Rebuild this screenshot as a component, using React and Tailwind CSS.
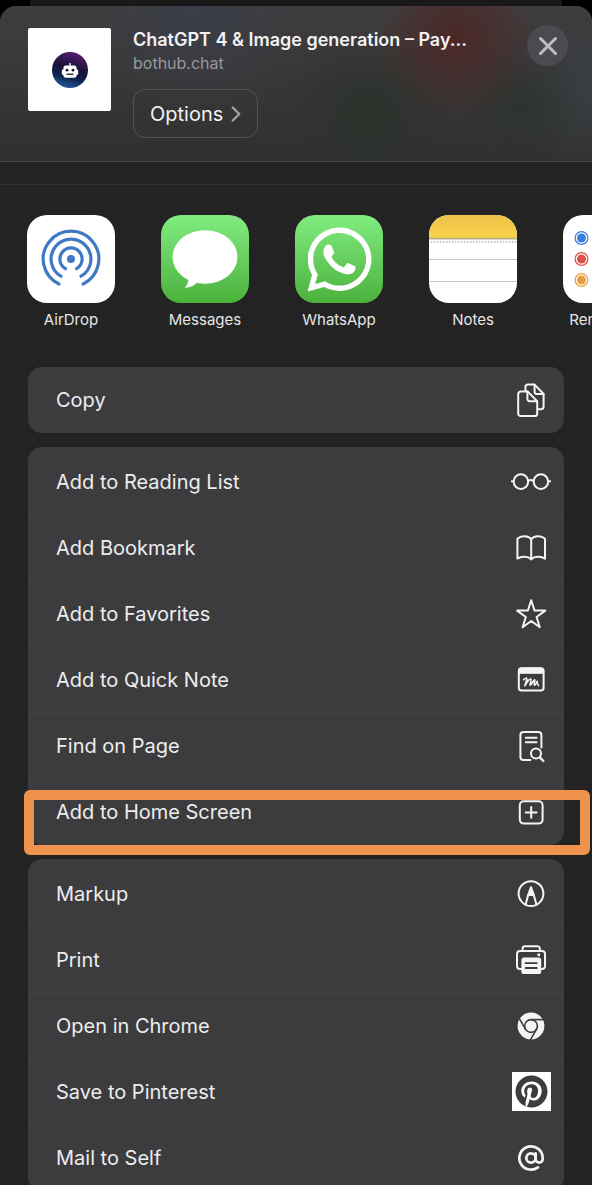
import React from "react";
import { FaWhatsapp, FaPinterest } from "react-icons/fa";
import { AtSign, ChevronRight, X } from "lucide-react";

const LineIcon = ({ children }) => (
    <svg
        viewBox="0 0 40 40"
        className="h-10 w-10"
        fill="none"
        stroke="currentColor"
        strokeWidth="2"
        strokeLinecap="round"
        strokeLinejoin="round"
        aria-hidden="true"
    >
        {children}
    </svg>
);

const CopyIcon = () => (
    <LineIcon>
        <path d="M14.4 10.5V7.2a2.6 2.6 0 0 1 2.6-2.6h6.6l9 9.4v12.6a2.6 2.6 0 0 1-2.6 2.6h-3" />
        <path d="M23.6 4.8v7a2.2 2.2 0 0 0 2.2 2.2h6.6" />
        <path d="M9.8 11.4h6.8l9.6 9.8v12.2a2.6 2.6 0 0 1-2.6 2.6H9.8a2.6 2.6 0 0 1-2.6-2.6V14a2.6 2.6 0 0 1 2.6-2.6z" />
        <path d="M16.4 11.6v7.4a2.2 2.2 0 0 0 2.2 2.2h7.4" />
    </LineIcon>
);

const GlassesIcon = () => (
    <LineIcon>
        <circle cx="9.9" cy="19.6" r="7.3" />
        <circle cx="29.9" cy="19.6" r="7.3" />
        <path d="M17.2 18.8q2.7-1.4 5.4 0M.8 19.2h1.8M37.4 19.2h1.8" />
    </LineIcon>
);

const BookIcon = () => (
    <LineIcon>
        <path d="M20.2 11.2C17.6 7.2 10 7.2 6.4 10.8v19.8c3.8-2.4 10.6-2.6 13.8.8 3.2-3.4 10-3.2 13.8-.8V10.8c-3.6-3.6-11.2-3.6-13.8.4z" />
        <path d="M20.2 11.2v20" />
    </LineIcon>
);

const StarIcon = () => (
    <LineIcon>
        <path d="M20.2 6.2l3.3 10.3 10.8.1-8.7 6.4 3.2 10.3-8.6-6.3-8.6 6.3 3.2-10.3-8.7-6.4 10.8-.1z" />
    </LineIcon>
);

const QuickNoteIcon = () => (
    <LineIcon>
        <rect x="7.8" y="8.2" width="24.8" height="22.4" rx="2.8" />
        <path d="M7.8 13.2V11a2.8 2.8 0 0 1 2.8-2.8h19.2a2.8 2.8 0 0 1 2.8 2.8v2.2z" fill="currentColor" strokeWidth="1.2" />
        <path d="M12.6 19.6c2-1.8 3.6-2 3.2 0l-2 6.2c2-4 5-7.6 6.2-6.6 1 .8-1.8 5.4-.8 6 .9.5 3-4.8 4.4-5.4 1 .2-1.2 4.6-.2 5.4.8.4 2-1.8 2.8-4 0 2.2.2 3.4 1.4 4.4" strokeWidth="1.6" />
    </LineIcon>
);

const FindIcon = () => (
    <LineIcon>
        <path d="M19.4 34h-7a3 3 0 0 1-3-3V9a3 3 0 0 1 3-3h15a3 3 0 0 1 3 3v12.4" />
        <path d="M14.8 11.7h10.8M14.8 16.2h10.8" />
        <circle cx="25" cy="27.6" r="5" />
        <path d="M28.8 31.4l3.6 3.6" strokeWidth="2.3" />
    </LineIcon>
);

const PlusBoxIcon = () => (
    <LineIcon>
        <rect x="8.8" y="9.2" width="22.8" height="22.4" rx="4" />
        <path d="M20.2 15v10.8M14.8 20.4h10.8" />
    </LineIcon>
);

const MarkupIcon = () => (
    <LineIcon>
        <circle cx="20" cy="19.6" r="12.4" />
        <path d="M14.6 30.6l2.6-9.6h5.6l2.6 9.6" />
        <path d="M20 13.2l-2.8 7.8h5.6z" fill="currentColor" />
    </LineIcon>
);

const PrintIcon = () => (
    <LineIcon>
        <path d="M11.6 11V8.6A2.4 2.4 0 0 1 14 6.2h12.4a2.4 2.4 0 0 1 2.4 2.4V11" />
        <path d="M10.6 29H9a3 3 0 0 1-3-3V14a3 3 0 0 1 3-3h22a3 3 0 0 1 3 3v12a3 3 0 0 1-3 3h-1.4" />
        <rect x="11.4" y="18.6" width="17.8" height="14.4" rx="1.6" fill="currentColor" />
        <path d="M14.6 23.2h11.2M14.6 28h11.2" stroke="#3c3c3e" strokeWidth="1.8" />
        <circle cx="27.8" cy="14.8" r="1.5" fill="currentColor" stroke="none" />
    </LineIcon>
);

const ChromeIcon = () => (
    <LineIcon>
        <circle cx="20" cy="20" r="13.4" fill="currentColor" stroke="none" />
        <g stroke="#3c3c3e" strokeWidth="1.6" strokeLinecap="butt">
            <circle cx="20" cy="20" r="6.4" fill="#f4f4f4" />
            <path d="M20 13.6h14" />
            <path d="M20 13.6h14" transform="rotate(120 20 20)" />
            <path d="M20 13.6h14" transform="rotate(240 20 20)" />
        </g>
    </LineIcon>
);

const PinterestIcon = () => (
    <span className="flex h-[39px] w-[39px] items-center justify-center bg-white text-[#3c3c3e]">
        <FaPinterest size={33} />
    </span>
);

const AtIcon = () => <AtSign size={28} strokeWidth={2.3} />;

const AirDropArt = () => (
    <svg viewBox="0 0 88 88" className="h-full w-full bg-white" fill="none" stroke="#3f79c4" strokeWidth="3.2" strokeLinecap="round" aria-hidden="true">
        <circle cx="44" cy="44" r="4" fill="#3f79c4" stroke="none" />
        <path d="M38.4 53.6a11.1 11.1 0 1 1 11.2 0" />
        <path d="M34 61.2a19.9 19.9 0 1 1 20 0" />
        <path d="M31.9 69a27.8 27.8 0 1 1 24.2 0" />
    </svg>
);

const MessagesArt = () => (
    <span className="block h-full w-full bg-linear-to-b from-[#82ec80] to-[#4bb23c]">
        <svg viewBox="0 0 88 88" className="h-full w-full" fill="#fff" aria-hidden="true">
            <ellipse cx="44" cy="42" rx="32.5" ry="26.8" />
            <path d="M27.4 62c.2 5.2-1.2 8.4-3.6 10.8 5 .2 9.6-2 13-6z" />
        </svg>
    </span>
);

const WhatsAppArt = () => (
    <span className="flex h-full w-full items-center justify-center bg-linear-to-b from-[#82ec80] to-[#4bb23c] text-white">
        <FaWhatsapp size={73} />
    </span>
);

const NotesArt = () => (
    <svg viewBox="0 0 88 88" className="h-full w-full bg-white" aria-hidden="true">
        <defs>
            <linearGradient id="notesTop" x1="0" y1="0" x2="0" y2="1">
                <stop offset="0" stopColor="#eec24a" />
                <stop offset="1" stopColor="#fad24b" />
            </linearGradient>
        </defs>
        <rect width="88" height="23" fill="url(#notesTop)" />
        <path d="M0 23.6h88" stroke="#b9ac8c" strokeWidth="1.6" />
        <path d="M2 27h86" stroke="#b4b4b4" strokeWidth="1.4" strokeDasharray="1.4 1.6" />
        <path d="M0 44.5h88M0 66.5h88" stroke="#c6c6c6" />
    </svg>
);

const RemindersArt = () => (
    <svg viewBox="0 0 88 88" className="h-full w-full bg-white" aria-hidden="true">
        {[["#3b7ddd", 23], ["#dd5145", 44], ["#e99f3e", 65]].map(([color, y]) => (
            <g key={y}>
                <circle cx="18.5" cy={y} r="6.4" fill="none" stroke={color} strokeWidth="1.2" />
                <circle cx="18.5" cy={y} r="4.5" fill={color} />
                <path d={`M32 ${y}h56`} stroke="#d0d0d0" />
            </g>
        ))}
    </svg>
);

const apps = [
    { name: "AirDrop", Art: AirDropArt },
    { name: "Messages", Art: MessagesArt },
    { name: "WhatsApp", Art: WhatsAppArt },
    { name: "Notes", Art: NotesArt },
    { name: "Reminders", Art: RemindersArt },
];

const groups = [
    [{ label: "Copy", Icon: CopyIcon }],
    [
        { label: "Add to Reading List", Icon: GlassesIcon },
        { label: "Add Bookmark", Icon: BookIcon },
        { label: "Add to Favorites", Icon: StarIcon },
        { label: "Add to Quick Note", Icon: QuickNoteIcon },
        { label: "Find on Page", Icon: FindIcon },
        { label: "Add to Home Screen", Icon: PlusBoxIcon, highlighted: true },
    ],
    [
        { label: "Markup", Icon: MarkupIcon },
        { label: "Print", Icon: PrintIcon },
        { label: "Open in Chrome", Icon: ChromeIcon },
        { label: "Save to Pinterest", Icon: PinterestIcon },
        { label: "Mail to Self", Icon: AtIcon },
    ],
];

function SiteLogo() {
    return (
        <div className="flex h-[83px] w-[83px] shrink-0 items-center justify-center rounded-xs bg-white">
            <svg viewBox="0 0 36 36" className="h-9 w-9" aria-hidden="true">
                <defs>
                    <linearGradient id="logoBg" x1="0.65" y1="0" x2="0.35" y2="1">
                        <stop offset="0" stopColor="#5b1a72" />
                        <stop offset="0.45" stopColor="#161338" />
                        <stop offset="0.7" stopColor="#10224f" />
                        <stop offset="1" stopColor="#245a9c" />
                    </linearGradient>
                </defs>
                <circle cx="18" cy="18" r="18" fill="url(#logoBg)" />
                <path d="M17.3 11h1.4v3h-1.4z" fill="#fff" />
                <rect x="11.4" y="13.6" width="13.2" height="12.2" rx="2.4" fill="#fff" />
                <rect x="9.8" y="17.6" width="16.4" height="5.4" rx="1.4" fill="#fff" />
                <circle cx="15" cy="18.2" r="1.4" fill="#161338" />
                <circle cx="21" cy="18.2" r="1.4" fill="#161338" />
                <path d="M14.6 22.2h6.8" stroke="#161338" strokeWidth="1.3" />
            </svg>
        </div>
    );
}

function Header() {
    return (
        <header className="flex rounded-t-2xl border-b border-[#444446] bg-[radial-gradient(circle_at_77%_20%,#4c2827_0,#4c282700_80px),radial-gradient(circle_at_62%_70%,#2c322c_0,#2c322c00_90px),radial-gradient(circle_at_88%_65%,#2d332e_0,#2d332e00_60px),radial-gradient(circle_at_33%_0%,#3a3e49_0,#3a3e4900_110px),radial-gradient(circle_at_100%_50%,#393e42_0,#393e4200_90px),linear-gradient(to_bottom,#403d3e,#303030)] px-7 pt-[22px] pr-6 pb-[23px]">
            <SiteLogo />
            <div className="ml-[22px] min-w-0 flex-1">
                <h1 className="truncate text-lg leading-6 font-semibold text-[#f2f2f2]">
                    ChatGPT 4 &amp; Image generation – Pay...
                </h1>
                <p className="text-base leading-[22px] text-[#98989b]">bothub.chat</p>
                <button className="mt-[15px] flex h-[49px] items-center rounded-xl border border-[#535353] pr-2 pl-4 text-xl text-[#f2f2f2]">
                    Options
                    <ChevronRight size={26} strokeWidth={2.2} className="text-[#a3a3a5]" />
                </button>
            </div>
            <button
                aria-label="Close"
                className="-mt-[3px] ml-4 flex h-[41px] w-[41px] shrink-0 items-center justify-center rounded-full bg-[#4c4a4e] text-[#bdbcc1]"
            >
                <X size={30} strokeWidth={2.4} />
            </button>
        </header>
    );
}

function App() {
    return (
        <div className="h-screen overflow-hidden bg-[linear-gradient(to_right,#000_5%,#19191a_5%,#19191a_95%,#000_95%)] pt-[6px] font-[Inter,'Liberation_Sans',sans-serif]">
            <div className="min-h-full rounded-t-2xl bg-[#232324]">
                <Header />
                <div className="h-[23px] border-b border-[#323234]" />

                <nav aria-label="Apps" className="flex gap-[46px] overflow-hidden pt-[30px] pl-[27px]">
                    {apps.map(({ name, Art }) => (
                        <button key={name} className="w-22 shrink-0 text-center">
                            <span className="block h-22 w-22 overflow-hidden rounded-[20px]">
                                <Art />
                            </span>
                            <span className="mt-[7px] block text-[15px] leading-5 text-[#e6e6e6]">{name}</span>
                        </button>
                    ))}
                </nav>

                <main className="mt-[37px] mr-7 ml-7 flex flex-col gap-[14px]">
                    {groups.map((group) => (
                        <ul
                            key={group[0].label}
                            className={`divide-y divide-[#424245] rounded-[14px] bg-[#3c3c3e] ${group.length > 1 ? "pt-0.5" : ""}`}
                        >
                            {group.map(({ label, Icon, highlighted }) => (
                                <li key={label} className="relative h-[66px]">
                                    <button className="flex h-full w-full items-center justify-between pr-[13px] pl-7 text-left text-xl text-[#ededee]">
                                        {label}
                                        <span className="flex w-10 justify-center text-[#f4f4f4]">
                                            <Icon />
                                        </span>
                                    </button>
                                    {highlighted && (
                                        <span className="pointer-events-none absolute top-[11px] -right-[26px] -bottom-[10px] -left-1 rounded-md border-10 border-[#ef924e]" />
                                    )}
                                </li>
                            ))}
                        </ul>
                    ))}
                </main>
            </div>
        </div>
    );
}

export default App;
